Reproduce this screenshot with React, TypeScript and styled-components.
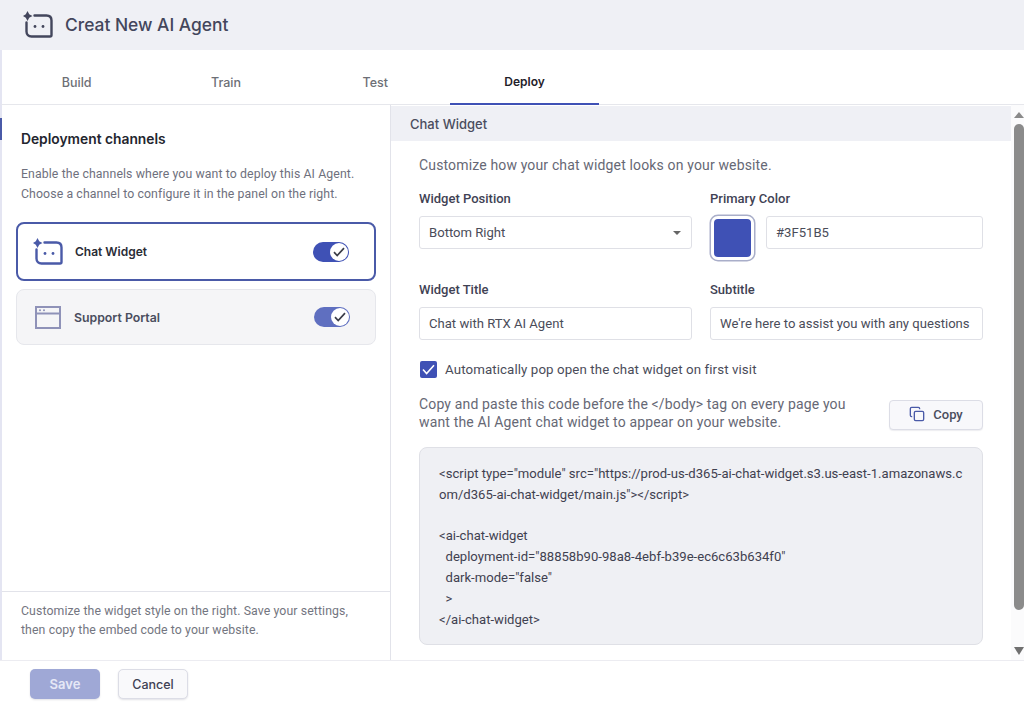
import React from "react";
import styled, { createGlobalStyle } from "styled-components";
import { Copy } from "lucide-react";

const GlobalStyle = createGlobalStyle`
  html, body {
    margin: 0;
    padding: 0;
    background: #fff;
    font-family: "Roboto", "Liberation Sans", sans-serif;
    color: #3f4254;
  }
  * { box-sizing: border-box; }
`;

const Page = styled.div`
  width: 1024px;
  height: 706px;
  display: flex;
  flex-direction: column;
  overflow: hidden;
  background: #fff;
`;

const Header = styled.header`
  height: 50px;
  flex: none;
  display: flex;
  align-items: center;
  gap: 12px;
  padding: 0 0 2px 23px;
  background: #eff0f5;
`;

const Title = styled.h1`
  margin: 0;
  font: 500 17.4px "Inter", sans-serif;
  color: #43465c;
`;

const Tabs = styled.nav`
  height: 55px;
  flex: none;
  display: flex;
  border-left: 2px solid #e4e5f2;
  border-bottom: 1px solid #e6e7ec;
`;

const Tab = styled.div<{ $active?: boolean }>`
  width: 149.3px;
  height: 55px;
  display: flex;
  align-items: center;
  justify-content: center;
  padding-top: 10px;
  font: ${(p) => (p.$active ? 600 : 500)} ${(p) => (p.$active ? 12 : 12.5)}px "Inter", sans-serif;
  color: ${(p) => (p.$active ? "#1f2129" : "#6d6f76")};
  border-bottom: ${(p) => (p.$active ? "2px solid #3f51b5" : "none")};
`;

const Body = styled.div`
  flex: 1;
  min-height: 0;
  display: flex;
  position: relative;
  border-left: 2px solid #e4e5f2;
`;

const SideMark = styled.span`
  position: absolute;
  left: -2px;
  top: 13px;
  width: 2px;
  height: 22px;
  background: #4a5aa8;
`;

const LeftPanel = styled.aside`
  width: 389px;
  flex: none;
  display: flex;
  flex-direction: column;
  border-right: 1px solid #e2e3ea;
`;

const LeftTop = styled.div`
  flex: 1;
  padding: 26px 14px 0;
`;

const PanelTitle = styled.h2`
  margin: 0 0 16px 5px;
  font: 600 13.8px/17px "Inter", sans-serif;
  color: #23252e;
`;

const PanelText = styled.p`
  margin: 0 0 18px 5px;
  font-size: 12.3px;
  line-height: 20px;
  letter-spacing: 0.1px;
  color: #6e707d;
`;

const Channel = styled.div<{ $selected?: boolean }>`
  height: ${(p) => (p.$selected ? "59px" : "56px")};
  margin-bottom: 8px;
  display: flex;
  align-items: center;
  padding: 0 25px 0 ${(p) => (p.$selected ? "15px" : "18px")};
  border-radius: 8px;
  background: ${(p) => (p.$selected ? "#fff" : "#f5f5f7")};
  border: ${(p) => (p.$selected ? "2px solid #4a5aa8" : "1px solid #e6e7ec")};
`;

const ChannelName = styled.span<{ $muted?: boolean }>`
  flex: 1;
  margin-left: ${(p) => (p.$muted ? "13px" : "12px")};
  font: 600 ${(p) => (p.$muted ? 12.3 : 12)}px "Inter", sans-serif;
  color: ${(p) => (p.$muted ? "#4a4d5e" : "#2a2c36")};
`;

const Toggle = styled.span<{ $muted?: boolean }>`
  width: 36px;
  height: 20px;
  border-radius: 10px;
  background: ${(p) => (p.$muted ? "#5f6fc0" : "#3f51b5")};
  display: flex;
  align-items: center;
  justify-content: flex-end;
  padding-right: 1px;
`;

const Knob = styled.span`
  width: 18px;
  height: 18px;
  border-radius: 50%;
  background: #fff;
  display: flex;
  align-items: center;
  justify-content: center;
`;

const LeftFooter = styled.div`
  height: 69px;
  flex: none;
  padding: 10px 19px 0;
  border-top: 1px solid #e2e3ea;
  font-size: 12.3px;
  line-height: 19px;
  letter-spacing: 0.1px;
  color: #737580;
`;

const RightPanel = styled.main`
  flex: 1;
  min-width: 0;
  display: flex;
`;

const RightContent = styled.div`
  flex: 1;
  min-width: 0;
`;

const SectionBar = styled.div`
  height: 35px;
  margin-top: 1px;
  display: flex;
  align-items: center;
  padding-left: 19px;
  background: #eff0f5;
  font: 500 13px "Inter", sans-serif;
  color: #4a4d5e;
`;

const Form = styled.div`
  padding: 16px 28px 0;
  width: 620px;
`;

const Lead = styled.p`
  margin: 0 0 16px;
  font-size: 14px;
  line-height: 17px;
  letter-spacing: 0.15px;
  color: #666875;
`;

const Row = styled.div`
  display: grid;
  grid-template-columns: 273px 273px;
  column-gap: 18px;
  margin-bottom: 21px;
`;

const Label = styled.label`
  display: block;
  margin-bottom: 9px;
  font-size: 13px;
  line-height: 17px;
  font-weight: 500;
  color: #3f4254;
`;

const Field = styled.div`
  height: 33px;
  display: flex;
  align-items: center;
  justify-content: space-between;
  padding: 0 9px;
  border: 1px solid #dfe0e6;
  border-radius: 3px;
  background: #fff;
  font-size: 13.1px;
  color: #4a4c59;
  white-space: nowrap;
`;

const ColorRow = styled.div`
  display: flex;
  gap: 11px;
`;

const Swatch = styled.div`
  width: 43px;
  height: 44px;
  flex: none;
  border-radius: 7px;
  background: #3f51b5;
  border: 3px solid #fff;
  box-shadow: 0 0 0 1.5px #a9aec9;
  margin: 0 1px 0 1px;
`;

const ColorField = styled(Field)`
  flex: 1;
`;

const Arrow = styled.span`
  width: 0;
  height: 0;
  margin-right: 1px;
  border-left: 4px solid transparent;
  border-right: 4px solid transparent;
  border-top: 4px solid #666;
`;

const CheckRow = styled.div`
  display: flex;
  align-items: center;
  gap: 8px;
  margin: 0 0 17px 1px;
  font-size: 13.3px;
  letter-spacing: 0.1px;
  color: #4a4c59;
`;

const CheckBox = styled.span`
  width: 17px;
  height: 17px;
  border-radius: 2px;
  background: #3f51b5;
  display: flex;
  align-items: center;
  justify-content: center;
`;

const CopyRow = styled.div`
  display: flex;
  align-items: flex-start;
  justify-content: space-between;
  width: 564px;
  margin-bottom: 16px;
`;

const CopyText = styled.p`
  margin: 0;
  font-size: 14px;
  line-height: 18px;
  letter-spacing: 0.15px;
  color: #666875;
`;

const CopyButton = styled.button`
  width: 94px;
  height: 30px;
  margin-top: 5px;
  display: flex;
  align-items: center;
  justify-content: center;
  gap: 8px;
  border: 1px solid #dcdde6;
  border-radius: 4px;
  background: #f8f8fb;
  box-shadow: 0 1px 1px rgba(40, 44, 80, 0.08);
  font: 500 13px "Roboto", sans-serif;
  color: #4a4d5e;
  padding: 0 0 2px;
`;

const Code = styled.pre`
  margin: 0;
  width: 564px;
  height: 198px;
  padding: 16px 19px;
  background: #eff0f4;
  border: 1px solid #dfe0e6;
  border-radius: 8px;
  font-family: "Roboto", sans-serif;
  font-size: 13.1px;
  line-height: 20.8px;
  color: #3f4150;
  white-space: pre-wrap;
  word-break: break-all;
`;

const Scrollbar = styled.div`
  width: 13px;
  flex: none;
  display: flex;
  flex-direction: column;
  align-items: center;
  background: #fbfbfc;
  padding: 7px 0 0 3px;
`;

const ScrollUp = styled.span`
  width: 0;
  height: 0;
  border-left: 5px solid transparent;
  border-right: 5px solid transparent;
  border-bottom: 6px solid #8a8a8a;
`;

const ScrollDown = styled.span`
  width: 0;
  height: 0;
  margin-top: 37px;
  border-left: 5px solid transparent;
  border-right: 5px solid transparent;
  border-top: 8px solid #707070;
`;

const ScrollThumb = styled.div`
  width: 10px;
  height: 486px;
  margin-top: 6px;
  border-radius: 5px;
  background: #8b8b8b;
`;

const Footer = styled.footer`
  height: 46px;
  flex: none;
  display: flex;
  gap: 18px;
  padding: 8px 0 0 30px;
  border-top: 1px solid #ececf1;
`;

const FooterButton = styled.button<{ $primary?: boolean }>`
  width: 70px;
  height: 30px;
  padding: 0;
  border-radius: 5px;
  font: ${(p) => (p.$primary ? 600 : 500)} ${(p) => (p.$primary ? 13 : 12.5)}px "Inter", sans-serif;
  color: ${(p) => (p.$primary ? "#e6e8f6" : "#3f4254")};
  background: ${(p) => (p.$primary ? "#9fa8d6" : "#f9f9fb")};
  border: ${(p) => (p.$primary ? "none" : "1px solid #dcdde6")};
  box-shadow: 0 1px 2px rgba(40, 44, 80, 0.14);
`;

const AgentIcon = ({ size, color }: { size: number; color: string }) => (
  <svg width={size} height={size * 0.9} viewBox="0 0 30 27" fill="none">
    <path
      d="M11.5 4.5H23.5C26.5 4.5 28.5 6.5 28.5 9.5V24C28.5 25 28 25.5 27 25.5H8.5C5.5 25.5 3.5 23.5 3.5 20.5V11.5"
      stroke={color}
      strokeWidth="2.4"
      strokeLinecap="round"
    />
    <path d="M4.5 0L6.2 3.3L9.5 5L6.2 6.7L4.5 10L2.8 6.7L0 5L2.8 3.3Z" fill={color} />
    <circle cx="12" cy="15.5" r="1.4" fill={color} />
    <circle cx="20" cy="15.5" r="1.4" fill={color} />
  </svg>
);

const PortalIcon = () => (
  <svg width="26" height="23" viewBox="0 0 26 23" fill="none">
    <rect x="1" y="1" width="24" height="21" stroke="#8f92b8" strokeWidth="2" />
    <path d="M1 7.5H25" stroke="#8f92b8" strokeWidth="2" />
    <circle cx="5" cy="4.2" r="1" fill="#8f92b8" />
    <circle cx="9" cy="4.2" r="1" fill="#8f92b8" />
  </svg>
);

const SwitchOn = ({ muted }: { muted?: boolean }) => (
  <Toggle $muted={muted}>
    <Knob>
      <svg width="12" height="10" viewBox="0 0 12 10" fill="none">
        <path d="M1 5.2L4.2 8.5L11 1.2" stroke="#3b3d48" strokeWidth="1.7" />
      </svg>
    </Knob>
  </Toggle>
);

const snippet = `<script type="module" src="https://prod-us-d365-ai-chat-widget.s3.us-east-1.amazonaws.com/d365-ai-chat-widget/main.js"></script>

<ai-chat-widget
  deployment-id="88858b90-98a8-4ebf-b39e-ec6c63b634f0"
  dark-mode="false"
  >
</ai-chat-widget>`;

export default function App() {
  return (
    <Page>
      <GlobalStyle />
      <Header>
        <AgentIcon size={30} color="#43465c" />
        <Title>Creat New AI Agent</Title>
      </Header>
      <Tabs>
        <Tab>Build</Tab>
        <Tab>Train</Tab>
        <Tab>Test</Tab>
        <Tab $active>Deploy</Tab>
      </Tabs>
      <Body>
        <SideMark />
        <LeftPanel>
          <LeftTop>
            <PanelTitle>Deployment channels</PanelTitle>
            <PanelText>
              Enable the channels where you want to deploy this AI Agent.
              <br />
              Choose a channel to configure it in the panel on the right.
            </PanelText>
            <Channel $selected>
              <AgentIcon size={30} color="#4a5aa8" />
              <ChannelName>Chat Widget</ChannelName>
              <SwitchOn />
            </Channel>
            <Channel>
              <PortalIcon />
              <ChannelName $muted>Support Portal</ChannelName>
              <SwitchOn muted />
            </Channel>
          </LeftTop>
          <LeftFooter>
            Customize the widget style on the right. Save your settings,
            <br />
            then copy the embed code to your website.
          </LeftFooter>
        </LeftPanel>
        <RightPanel>
          <RightContent>
            <SectionBar>Chat Widget</SectionBar>
            <Form>
              <Lead>Customize how your chat widget looks on your website.</Lead>
              <Row>
                <div>
                  <Label>Widget Position</Label>
                  <Field>
                    Bottom Right
                    <Arrow />
                  </Field>
                </div>
                <div>
                  <Label>Primary Color</Label>
                  <ColorRow>
                    <Swatch />
                    <ColorField>#3F51B5</ColorField>
                  </ColorRow>
                </div>
              </Row>
              <Row>
                <div>
                  <Label>Widget Title</Label>
                  <Field>Chat with RTX AI Agent</Field>
                </div>
                <div>
                  <Label>Subtitle</Label>
                  <Field>We're here to assist you with any questions</Field>
                </div>
              </Row>
              <CheckRow>
                <CheckBox>
                  <svg width="13" height="11" viewBox="0 0 13 11" fill="none">
                    <path d="M1 5.5L4.6 9.5L12 1.2" stroke="#fff" strokeWidth="1.6" />
                  </svg>
                </CheckBox>
                Automatically pop open the chat widget on first visit
              </CheckRow>
              <CopyRow>
                <CopyText>
                  Copy and paste this code before the &lt;/body&gt; tag on every page you
                  <br />
                  want the AI Agent chat widget to appear on your website.
                </CopyText>
                <CopyButton>
                  <Copy size={16} color="#4a5aa8" />
                  Copy
                </CopyButton>
              </CopyRow>
              <Code>{snippet}</Code>
            </Form>
          </RightContent>
          <Scrollbar>
            <ScrollUp />
            <ScrollThumb />
            <ScrollDown />
          </Scrollbar>
        </RightPanel>
      </Body>
      <Footer>
        <FooterButton $primary>Save</FooterButton>
        <FooterButton>Cancel</FooterButton>
      </Footer>
    </Page>
  );
}
